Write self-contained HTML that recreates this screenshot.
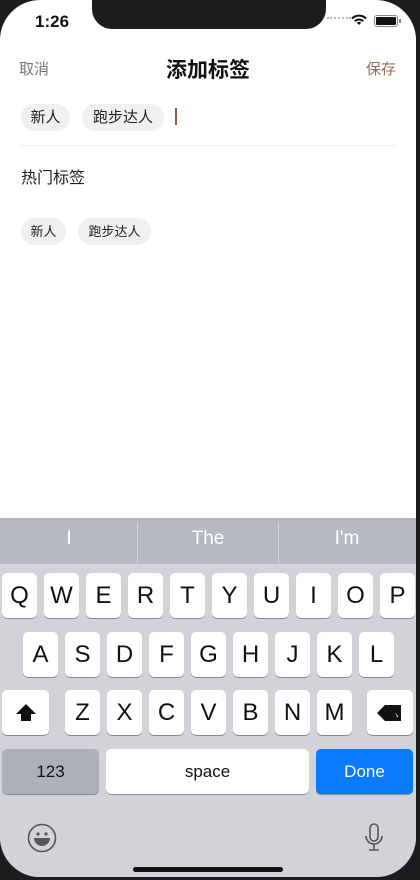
<!DOCTYPE html>
<html><head><meta charset="utf-8"><style>
*{margin:0;padding:0;box-sizing:border-box}
html,body{width:420px;height:880px;overflow:hidden;background:#1c1c1e}
body{font-family:"Liberation Sans","Noto Sans CJK SC",sans-serif;position:relative}
.scr{position:absolute;left:0;top:0;width:416px;height:877px;background:#fff;border-radius:40px;overflow:hidden}
.notch{position:absolute;left:92px;top:0;width:234px;height:29px;background:#1c1c1e;border-radius:0 0 20px 20px}
.a{position:absolute;white-space:nowrap}
.chip{position:absolute;background:#f0eff1;border-radius:14px;color:#222;text-align:center}
.kb{position:absolute;left:0;top:518px;width:416px;height:360px;background:#d1d3d9}
.sug{position:absolute;left:0;top:0;width:416px;height:46px;background:#b5b9c2}
.sug div{position:absolute;top:10px;width:138px;text-align:center;color:#fff;font-size:19px}
.k{position:absolute;width:35px;height:45px;background:#fff;border-radius:5px;box-shadow:0 1px 0 #888a8e;text-align:center;font-size:24px;line-height:46px;color:#111}
</style></head><body>
<div class="scr">
<div class="notch"></div>
<div class="a" style="left:35px;top:12px;font-size:17px;font-weight:bold;color:#111">1:26</div>
<div class="a" style="left:327px;top:17px;width:24px;height:2px;border-top:2px dotted #bbb"></div>
<svg class="a" style="left:351px;top:14px" width="16" height="12" viewBox="0 0 16 12"><path d="M1 4.5a10 10 0 0 1 14 0" stroke="#111" stroke-width="2" fill="none"/><path d="M3.8 7.2a6 6 0 0 1 8.4 0" stroke="#111" stroke-width="2" fill="none"/><path d="M8 11l-2.2-2.2a3 3 0 0 1 4.4 0z" fill="#111"/></svg>
<div class="a" style="left:374px;top:15px;width:24px;height:12px;border:1px solid #888;border-radius:3px;padding:1px"><div style="width:100%;height:100%;background:#111;border-radius:1px"></div></div>
<div class="a" style="left:399px;top:19px;width:2px;height:4px;background:#888"></div>
<div class="a" style="left:19px;top:58px;font-size:15px;color:#777">取消</div>
<div class="a" style="left:0;width:416px;text-align:center;top:54px;font-size:21px;font-weight:bold;color:#111">添加标签</div>
<div class="a" style="left:366px;top:58px;font-size:15px;color:#9a6a5a">保存</div>
<div class="chip" style="left:21px;top:104px;width:49px;height:27px;font-size:15px;line-height:27px">新人</div>
<div class="chip" style="left:82px;top:104px;width:82px;height:27px;font-size:15px;line-height:27px">跑步达人</div>
<div class="a" style="left:175px;top:108px;width:2px;height:17px;background:#8a5a4a"></div>
<div class="a" style="left:21px;top:145px;width:374px;height:1px;background:#eee"></div>
<div class="a" style="left:21px;top:164px;font-size:16px;color:#222">热门标签</div>
<div class="chip" style="left:21px;top:218px;width:45px;height:27px;font-size:13px;line-height:27px">新人</div>
<div class="chip" style="left:78px;top:218px;width:73px;height:27px;font-size:13px;line-height:27px">跑步达人</div>
<div class="kb">
<div class="sug"><div style="left:0">I</div><div style="left:139px">The</div><div style="left:278px">I'm</div>
<div class="a" style="left:137px;top:4px;width:1px;height:42px;background:#cfd2d8"></div><div class="a" style="left:278px;top:4px;width:1px;height:42px;background:#cfd2d8"></div></div>
<div class="k" style="left:2px;top:55px">Q</div><div class="k" style="left:44px;top:55px">W</div><div class="k" style="left:86px;top:55px">E</div><div class="k" style="left:128px;top:55px">R</div><div class="k" style="left:170px;top:55px">T</div><div class="k" style="left:212px;top:55px">Y</div><div class="k" style="left:254px;top:55px">U</div><div class="k" style="left:296px;top:55px">I</div><div class="k" style="left:338px;top:55px">O</div><div class="k" style="left:380px;top:55px">P</div>
<div class="k" style="left:23px;top:114px">A</div><div class="k" style="left:65px;top:114px">S</div><div class="k" style="left:107px;top:114px">D</div><div class="k" style="left:149px;top:114px">F</div><div class="k" style="left:191px;top:114px">G</div><div class="k" style="left:233px;top:114px">H</div><div class="k" style="left:275px;top:114px">J</div><div class="k" style="left:317px;top:114px">K</div><div class="k" style="left:359px;top:114px">L</div>
<div class="k" style="left:2px;top:172px;width:47px"><svg width="22" height="20" viewBox="0 0 22 20" style="margin-top:13px"><path d="M11 1L1 11h5v7h10v-7h5z" fill="#111"/></svg></div>
<div class="k" style="left:65px;top:172px">Z</div><div class="k" style="left:107px;top:172px">X</div><div class="k" style="left:149px;top:172px">C</div><div class="k" style="left:191px;top:172px">V</div><div class="k" style="left:233px;top:172px">B</div><div class="k" style="left:275px;top:172px">N</div><div class="k" style="left:317px;top:172px">M</div>
<div class="k" style="left:367px;top:172px;width:46px"><svg width="28" height="20" viewBox="0 0 28 20" style="margin-top:13px"><path d="M9 2h16v16H9L1 10z" fill="#111"/><path d="M17 5l6 9-2 1z" fill="#fff" stroke="#111" stroke-width="1"/></svg></div>
<div class="k" style="left:2px;top:231px;width:97px;background:#abb0ba;font-size:17px">123</div>
<div class="k" style="left:106px;top:231px;width:203px;font-size:17px">space</div>
<div class="k" style="left:316px;top:231px;width:97px;background:#0a7aff;color:#fff;font-size:17px">Done</div>
<svg class="a" style="left:27px;top:305px" width="30" height="30" viewBox="0 0 30 30"><circle cx="15" cy="15" r="13.5" fill="none" stroke="#555" stroke-width="1.6"/><circle cx="11" cy="11" r="1.6" fill="#555"/><circle cx="19" cy="11" r="1.6" fill="#555"/><path d="M7 15h16a8 8 0 0 1-16 0z" fill="#555"/></svg>
<svg class="a" style="left:364px;top:305px" width="20" height="32" viewBox="0 0 20 32"><rect x="6" y="1" width="8" height="17" rx="4" fill="none" stroke="#555" stroke-width="1.6"/><path d="M2 13a8 8 0 0 0 16 0M10 21v6M5 27h10" fill="none" stroke="#555" stroke-width="1.6"/></svg>
<div class="a" style="left:133px;top:349px;width:150px;height:5px;background:#111;border-radius:3px"></div>
</div>
</div>
</body></html>
